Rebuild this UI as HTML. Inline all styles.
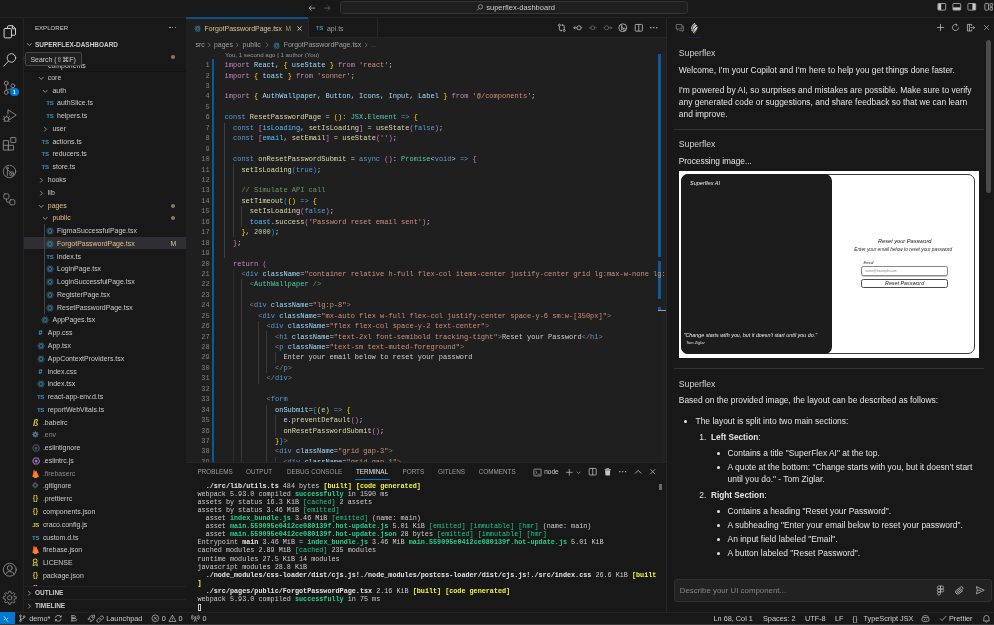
<!DOCTYPE html>
<html lang="en"><head><meta charset="utf-8"><title>superflex-dashboard</title>
<style>
html,body{margin:0;padding:0}
body{width:994px;height:625px;overflow:hidden;background:#181818;position:relative;font-family:"Liberation Sans",sans-serif;-webkit-font-smoothing:antialiased}
.t{position:absolute;white-space:nowrap;margin:0}
.b{position:absolute;display:block}
b{font-weight:bold}
#root{position:absolute;left:0;top:0;width:994px;height:625px;overflow:hidden;will-change:transform}
</style></head>
<body>
<div id="root">
<div class="b" style="left:0.00px;top:0.00px;width:994.00px;height:17.40px;background:#181818;"></div>
<div class="b" style="left:0.00px;top:17.20px;width:994.00px;height:0.90px;background:#242424;"></div>
<svg class="b" style="left:308.40px;top:3.50px;" width="8.2" height="8.2" viewBox="0 0 16 16"><path d="M14 8H2.5M7 3.2L2.2 8 7 12.8" fill="none" stroke="#c8c8c8" stroke-width="1.4"/></svg>
<svg class="b" style="left:323.40px;top:3.50px;" width="8.2" height="8.2" viewBox="0 0 16 16"><path d="M2 8h11.5M9 3.2L13.8 8 9 12.8" fill="none" stroke="#6a6a6a" stroke-width="1.4"/></svg>
<div class="b" style="left:339.50px;top:0.80px;width:348.80px;height:13.20px;background:#1f1f1f;border:0.7px solid #343434;border-radius:3.2px;box-sizing:border-box;"></div>
<svg class="b" style="left:475.50px;top:3.70px;" width="7.4" height="7.4" viewBox="0 0 16 16"><circle cx="9.8" cy="6.2" r="4.6" fill="none" stroke="#c8c8c8" stroke-width="1.3"/><path d="M6.4 9.6L1.6 14.4" stroke="#c8c8c8" stroke-width="1.3"/></svg>
<div class="t" style="top:2.00px;line-height:12.06px;font-size:7.54px;color:#cccccc;left:486.20px;">superflex-dashboard</div>
<svg class="b" style="left:937.45px;top:2.40px;" width="9.6" height="9.6" viewBox="0 0 16 16"><rect x="1.5" y="2.5" width="13" height="11" rx="1.2" fill="none" stroke="#ccc" stroke-width="1.2"/><rect x="2" y="3" width="5" height="10" fill="#ccc"/></svg>
<svg class="b" style="left:952.45px;top:2.40px;" width="9.6" height="9.6" viewBox="0 0 16 16"><rect x="1.5" y="2.5" width="13" height="11" rx="1.2" fill="none" stroke="#ccc" stroke-width="1.2"/><rect x="2" y="9" width="12" height="4" fill="#ccc"/></svg>
<svg class="b" style="left:967.45px;top:2.40px;" width="9.6" height="9.6" viewBox="0 0 16 16"><rect x="1.5" y="2.5" width="13" height="11" rx="1.2" fill="none" stroke="#ccc" stroke-width="1.2"/><rect x="9" y="3" width="5" height="10" fill="#ccc"/></svg>
<svg class="b" style="left:983.60px;top:2.40px;" width="9.6" height="9.6" viewBox="0 0 16 16"><rect x="1.5" y="2.5" width="6" height="11" rx="1" fill="none" stroke="#ccc" stroke-width="1.2"/><rect x="10" y="2.5" width="4.5" height="4.5" rx="1" fill="none" stroke="#ccc" stroke-width="1.2"/><rect x="10" y="9" width="4.5" height="4.5" rx="1" fill="none" stroke="#ccc" stroke-width="1.2"/></svg>
<div class="b" style="left:186.00px;top:18.00px;width:480.00px;height:444.00px;background:#1f1f1f;"></div>
<div class="b" style="left:186.00px;top:18.00px;width:480.00px;height:19.60px;background:#181818;"></div>
<div class="b" style="left:186.00px;top:37.20px;width:480.00px;height:0.80px;background:#262626;"></div>
<div class="b" style="left:186.40px;top:18.00px;width:121.60px;height:20.00px;background:#1f1f1f;"></div>
<div class="b" style="left:186.00px;top:17.10px;width:122.00px;height:1.70px;background:#0c5288;"></div>
<div class="b" style="left:308.00px;top:18.00px;width:0.70px;height:19.40px;background:#262626;"></div>
<div class="b" style="left:377.40px;top:18.00px;width:0.70px;height:19.40px;background:#262626;"></div>
<svg class="b" style="left:193.90px;top:24.50px;color:#3d8fb5;" width="7.4" height="7.4" viewBox="0 0 16 16"><g fill="none" stroke="currentColor" stroke-width="0.95"><ellipse cx="8" cy="8" rx="7" ry="2.8"/><ellipse cx="8" cy="8" rx="7" ry="2.8" transform="rotate(60 8 8)"/><ellipse cx="8" cy="8" rx="7" ry="2.8" transform="rotate(120 8 8)"/></g><circle cx="8" cy="8" r="1.3" fill="#4a2a2a"/></svg>
<div class="t" style="top:23.00px;line-height:11.12px;font-size:6.95px;color:#e2c08d;left:204.50px;">ForgotPasswordPage.tsx</div>
<div class="t" style="top:24.00px;line-height:10.56px;font-size:6.6px;color:#a8946f;left:285.40px;">M</div>
<svg class="b" style="left:296.10px;top:24.50px;" width="7" height="7" viewBox="0 0 16 16"><path d="M3.2 3.2l9.6 9.6M12.8 3.2l-9.6 9.6" stroke="#e4e4e4" stroke-width="1.9" fill="none"/></svg>
<div class="t" style="left:309.40px;width:20px;text-align:center;top:23px;line-height:10px;font-size:6.1px;color:#3b8fc0;font-weight:bold;letter-spacing:-0.3px;">TS</div>
<div class="t" style="top:23.00px;line-height:11.12px;font-size:6.95px;color:#9d9d9d;left:327.00px;">api.ts</div>
<svg class="b" style="left:557.20px;top:22.80px;" width="9.6" height="9.6" viewBox="0 0 16 16"><g fill="none" stroke="#c5c5c5" stroke-width="1.3"><circle cx="4" cy="3.6" r="1.7"/><circle cx="12" cy="12.4" r="1.7"/><path d="M4 5.3v5.4a1.7 1.7 0 0 0 1.7 1.7h2M12 10.7V5.3a1.7 1.7 0 0 0-1.7-1.7h-2"/><path d="M9.6 2l-1.6 1.6 1.6 1.6M6.4 10.8L8 12.4 6.4 14"/></g></svg>
<svg class="b" style="left:573.20px;top:22.80px;" width="9.6" height="9.6" viewBox="0 0 16 16"><g fill="none" stroke="#c5c5c5" stroke-width="1.3"><circle cx="10" cy="8" r="3.4"/><path d="M6.6 8H1.2M3.6 5.6L1.2 8l2.4 2.4M13.4 8h1.8"/></g></svg>
<svg class="b" style="left:588.20px;top:22.80px;" width="9.6" height="9.6" viewBox="0 0 16 16"><g fill="none" stroke="#6c6c6c" stroke-width="1.3"><circle cx="8" cy="8" r="3.2"/><path d="M1.4 8h3.4M11.2 8h3.4"/></g></svg>
<svg class="b" style="left:603.20px;top:22.80px;" width="9.6" height="9.6" viewBox="0 0 16 16"><g fill="none" stroke="#6c6c6c" stroke-width="1.3"><circle cx="6" cy="8" r="3.4"/><path d="M9.4 8h5.4M12.4 5.6L14.8 8l-2.4 2.4M0.8 8h1.8"/></g></svg>
<svg class="b" style="left:618.20px;top:22.80px;" width="9.6" height="9.6" viewBox="0 0 16 16"><g fill="none" stroke="#c5c5c5" stroke-width="1.3"><circle cx="8" cy="8" r="6.6"/><circle cx="6" cy="4.8" r="1"/><path d="M6 5.8v6.4M6.2 6.4l3 3"/><circle cx="10.2" cy="10.4" r="2"/></g></svg>
<svg class="b" style="left:633.70px;top:22.80px;" width="9.6" height="9.6" viewBox="0 0 16 16"><g fill="none" stroke="#c5c5c5" stroke-width="1.3"><rect x="2" y="2.4" width="12" height="11.2" rx="1.2"/><path d="M8 2.4v11.2"/></g></svg>
<svg class="b" style="left:648.70px;top:22.80px;" width="9.6" height="9.6" viewBox="0 0 16 16"><g fill="#c5c5c5"><circle cx="3" cy="8" r="1.15"/><circle cx="8" cy="8" r="1.15"/><circle cx="13" cy="8" r="1.15"/></g></svg>
<div class="t" style="top:39.00px;line-height:11.12px;font-size:6.95px;color:#a0a0a0;left:195.50px;">src</div>
<svg class="b" style="left:205.60px;top:42.20px;color:#8a8a8a;" width="6" height="6" viewBox="0 0 16 16"><path d="M5.4 2.2L11.2 8l-5.8 5.8" fill="none" stroke="currentColor" stroke-width="1.7"/></svg>
<div class="t" style="top:39.00px;line-height:11.12px;font-size:6.95px;color:#a0a0a0;left:214.00px;">pages</div>
<svg class="b" style="left:234.00px;top:42.20px;color:#8a8a8a;" width="6" height="6" viewBox="0 0 16 16"><path d="M5.4 2.2L11.2 8l-5.8 5.8" fill="none" stroke="currentColor" stroke-width="1.7"/></svg>
<div class="t" style="top:39.00px;line-height:11.12px;font-size:6.95px;color:#a0a0a0;left:242.60px;">public</div>
<svg class="b" style="left:263.80px;top:42.20px;color:#8a8a8a;" width="6" height="6" viewBox="0 0 16 16"><path d="M5.4 2.2L11.2 8l-5.8 5.8" fill="none" stroke="currentColor" stroke-width="1.7"/></svg>
<svg class="b" style="left:273.10px;top:41.50px;color:#3d8fb5;" width="7.4" height="7.4" viewBox="0 0 16 16"><g fill="none" stroke="currentColor" stroke-width="0.95"><ellipse cx="8" cy="8" rx="7" ry="2.8"/><ellipse cx="8" cy="8" rx="7" ry="2.8" transform="rotate(60 8 8)"/><ellipse cx="8" cy="8" rx="7" ry="2.8" transform="rotate(120 8 8)"/></g><circle cx="8" cy="8" r="1.3" fill="#4a2a2a"/></svg>
<div class="t" style="top:39.00px;line-height:11.12px;font-size:6.95px;color:#a0a0a0;left:283.75px;">ForgotPasswordPage.tsx</div>
<svg class="b" style="left:363.40px;top:42.20px;color:#8a8a8a;" width="6" height="6" viewBox="0 0 16 16"><path d="M5.4 2.2L11.2 8l-5.8 5.8" fill="none" stroke="currentColor" stroke-width="1.7"/></svg>
<div class="t" style="top:41.00px;line-height:8.0px;font-size:5.0px;color:#a0a0a0;left:371.00px;">…</div>
<div class="t" style="top:51.00px;line-height:8px;font-size:6.13px;color:#999999;left:225.00px;">You, 1 second ago | 1 author (You)</div>
<div class="b" style="left:662.00px;top:51.00px;width:4.00px;height:411.00px;background:#212121;"></div>
<div class="b" style="left:658.40px;top:53.80px;width:3.10px;height:202.80px;background:#0c5a9b;"></div>
<div class="b" style="left:658.40px;top:260.60px;width:3.10px;height:38.20px;background:#0c5a9b;"></div>
<div class="b" style="left:658.40px;top:306.90px;width:3.10px;height:3.40px;background:#0c5a9b;"></div>
<div class="b" style="left:658.40px;top:310.30px;width:7.60px;height:0.80px;background:#a0a0a0;"></div>
<div class="b" style="left:186px;top:51px;width:480px;height:411px;overflow:hidden;"><div class="b" style="left:-186px;top:-51px;width:994px;height:625px;"><div class="t" style="top:60.00px;line-height:10px;font-size:7.004px;color:#808080;right:784.40px;font-family:'Liberation Mono', monospace;">1</div><div class="t" style="top:60.00px;line-height:10px;font-size:7.004px;color:#cccccc;left:224.60px;font-family:'Liberation Mono', monospace;white-space:pre;"><span style="color:#c586c0">import</span> <span style="color:#9cdcfe">React</span>, <span style="color:#ffd700">{</span> <span style="color:#9cdcfe">useState</span> <span style="color:#ffd700">}</span> <span style="color:#c586c0">from</span> <span style="color:#ce9178">'react'</span>;</div><div class="t" style="top:71.00px;line-height:10px;font-size:7.004px;color:#808080;right:784.40px;font-family:'Liberation Mono', monospace;">2</div><div class="t" style="top:71.00px;line-height:10px;font-size:7.004px;color:#cccccc;left:224.60px;font-family:'Liberation Mono', monospace;white-space:pre;"><span style="color:#c586c0">import</span> <span style="color:#ffd700">{</span> <span style="color:#9cdcfe">toast</span> <span style="color:#ffd700">}</span> <span style="color:#c586c0">from</span> <span style="color:#ce9178">'sonner'</span>;</div><div class="t" style="top:81.00px;line-height:10px;font-size:7.004px;color:#808080;right:784.40px;font-family:'Liberation Mono', monospace;">3</div><div class="t" style="top:91.00px;line-height:10px;font-size:7.004px;color:#808080;right:784.40px;font-family:'Liberation Mono', monospace;">4</div><div class="t" style="top:91.00px;line-height:10px;font-size:7.004px;color:#cccccc;left:224.60px;font-family:'Liberation Mono', monospace;white-space:pre;"><span style="color:#c586c0">import</span> <span style="color:#ffd700">{</span> <span style="color:#9cdcfe">AuthWallpaper</span>, <span style="color:#9cdcfe">Button</span>, <span style="color:#9cdcfe">Icons</span>, <span style="color:#9cdcfe">Input</span>, <span style="color:#9cdcfe">Label</span> <span style="color:#ffd700">}</span> <span style="color:#c586c0">from</span> <span style="color:#ce9178">'@/components'</span>;</div><div class="t" style="top:102.00px;line-height:10px;font-size:7.004px;color:#808080;right:784.40px;font-family:'Liberation Mono', monospace;">5</div><div class="t" style="top:112.00px;line-height:10px;font-size:7.004px;color:#808080;right:784.40px;font-family:'Liberation Mono', monospace;">6</div><div class="t" style="top:112.00px;line-height:10px;font-size:7.004px;color:#cccccc;left:224.60px;font-family:'Liberation Mono', monospace;white-space:pre;"><span style="color:#569cd6">const</span> <span style="color:#dcdcaa">ResetPasswordPage</span> = <span style="color:#ffd700">()</span>: <span style="color:#4ec9b0">JSX</span>.<span style="color:#4ec9b0">Element</span> <span style="color:#569cd6">=&gt;</span> <span style="color:#ffd700">{</span></div><div class="t" style="top:123.00px;line-height:10px;font-size:7.004px;color:#808080;right:784.40px;font-family:'Liberation Mono', monospace;">7</div><div class="t" style="top:123.00px;line-height:10px;font-size:7.004px;color:#cccccc;left:224.60px;font-family:'Liberation Mono', monospace;white-space:pre;">  <span style="color:#569cd6">const</span> <span style="color:#da70d6">[</span><span style="color:#4fc1ff">isLoading</span>, <span style="color:#dcdcaa">setIsLoading</span><span style="color:#da70d6">]</span> = <span style="color:#dcdcaa">useState</span><span style="color:#da70d6">(</span><span style="color:#569cd6">false</span><span style="color:#da70d6">)</span>;</div><div class="t" style="top:133.00px;line-height:10px;font-size:7.004px;color:#808080;right:784.40px;font-family:'Liberation Mono', monospace;">8</div><div class="t" style="top:133.00px;line-height:10px;font-size:7.004px;color:#cccccc;left:224.60px;font-family:'Liberation Mono', monospace;white-space:pre;">  <span style="color:#569cd6">const</span> <span style="color:#da70d6">[</span><span style="color:#4fc1ff">email</span>, <span style="color:#dcdcaa">setEmail</span><span style="color:#da70d6">]</span> = <span style="color:#dcdcaa">useState</span><span style="color:#da70d6">(</span><span style="color:#ce9178">''</span><span style="color:#da70d6">)</span>;</div><div class="t" style="top:144.00px;line-height:10px;font-size:7.004px;color:#808080;right:784.40px;font-family:'Liberation Mono', monospace;">9</div><div class="t" style="top:154.00px;line-height:10px;font-size:7.004px;color:#808080;right:784.40px;font-family:'Liberation Mono', monospace;">10</div><div class="t" style="top:154.00px;line-height:10px;font-size:7.004px;color:#cccccc;left:224.60px;font-family:'Liberation Mono', monospace;white-space:pre;">  <span style="color:#569cd6">const</span> <span style="color:#dcdcaa">onResetPasswordSubmit</span> = <span style="color:#569cd6">async</span> <span style="color:#da70d6">()</span>: <span style="color:#4ec9b0">Promise</span>&lt;<span style="color:#569cd6">void</span>&gt; <span style="color:#569cd6">=&gt;</span> <span style="color:#da70d6">{</span></div><div class="t" style="top:165.00px;line-height:10px;font-size:7.004px;color:#808080;right:784.40px;font-family:'Liberation Mono', monospace;">11</div><div class="t" style="top:165.00px;line-height:10px;font-size:7.004px;color:#cccccc;left:224.60px;font-family:'Liberation Mono', monospace;white-space:pre;">    <span style="color:#dcdcaa">setIsLoading</span><span style="color:#179fff">(</span><span style="color:#569cd6">true</span><span style="color:#179fff">)</span>;</div><div class="t" style="top:175.00px;line-height:10px;font-size:7.004px;color:#808080;right:784.40px;font-family:'Liberation Mono', monospace;">12</div><div class="t" style="top:185.00px;line-height:10px;font-size:7.004px;color:#808080;right:784.40px;font-family:'Liberation Mono', monospace;">13</div><div class="t" style="top:185.00px;line-height:10px;font-size:7.004px;color:#cccccc;left:224.60px;font-family:'Liberation Mono', monospace;white-space:pre;">    <span style="color:#6a9955">// Simulate API call</span></div><div class="t" style="top:196.00px;line-height:10px;font-size:7.004px;color:#808080;right:784.40px;font-family:'Liberation Mono', monospace;">14</div><div class="t" style="top:196.00px;line-height:10px;font-size:7.004px;color:#cccccc;left:224.60px;font-family:'Liberation Mono', monospace;white-space:pre;">    <span style="color:#dcdcaa">setTimeout</span><span style="color:#179fff">(</span><span style="color:#ffd700">()</span> <span style="color:#569cd6">=&gt;</span> <span style="color:#ffd700">{</span></div><div class="t" style="top:206.00px;line-height:10px;font-size:7.004px;color:#808080;right:784.40px;font-family:'Liberation Mono', monospace;">15</div><div class="t" style="top:206.00px;line-height:10px;font-size:7.004px;color:#cccccc;left:224.60px;font-family:'Liberation Mono', monospace;white-space:pre;">      <span style="color:#dcdcaa">setIsLoading</span><span style="color:#da70d6">(</span><span style="color:#569cd6">false</span><span style="color:#da70d6">)</span>;</div><div class="t" style="top:217.00px;line-height:10px;font-size:7.004px;color:#808080;right:784.40px;font-family:'Liberation Mono', monospace;">16</div><div class="t" style="top:217.00px;line-height:10px;font-size:7.004px;color:#cccccc;left:224.60px;font-family:'Liberation Mono', monospace;white-space:pre;">      <span style="color:#4fc1ff">toast</span>.<span style="color:#dcdcaa">success</span><span style="color:#da70d6">(</span><span style="color:#ce9178">'Password reset email sent'</span><span style="color:#da70d6">)</span>;</div><div class="t" style="top:227.00px;line-height:10px;font-size:7.004px;color:#808080;right:784.40px;font-family:'Liberation Mono', monospace;">17</div><div class="t" style="top:227.00px;line-height:10px;font-size:7.004px;color:#cccccc;left:224.60px;font-family:'Liberation Mono', monospace;white-space:pre;">    <span style="color:#ffd700">}</span>, <span style="color:#b5cea8">2000</span><span style="color:#179fff">)</span>;</div><div class="t" style="top:238.00px;line-height:10px;font-size:7.004px;color:#808080;right:784.40px;font-family:'Liberation Mono', monospace;">18</div><div class="t" style="top:238.00px;line-height:10px;font-size:7.004px;color:#cccccc;left:224.60px;font-family:'Liberation Mono', monospace;white-space:pre;">  <span style="color:#da70d6">}</span>;</div><div class="t" style="top:248.00px;line-height:10px;font-size:7.004px;color:#808080;right:784.40px;font-family:'Liberation Mono', monospace;">19</div><div class="t" style="top:259.00px;line-height:10px;font-size:7.004px;color:#808080;right:784.40px;font-family:'Liberation Mono', monospace;">20</div><div class="t" style="top:259.00px;line-height:10px;font-size:7.004px;color:#cccccc;left:224.60px;font-family:'Liberation Mono', monospace;white-space:pre;">  <span style="color:#c586c0">return</span> <span style="color:#da70d6">(</span></div><div class="t" style="top:269.00px;line-height:10px;font-size:7.004px;color:#808080;right:784.40px;font-family:'Liberation Mono', monospace;">21</div><div class="t" style="top:269.00px;line-height:10px;font-size:7.004px;color:#cccccc;left:224.60px;font-family:'Liberation Mono', monospace;white-space:pre;">    <span style="color:#808080">&lt;</span><span style="color:#569cd6">div</span> <span style="color:#9cdcfe">className</span>=<span style="color:#ce9178">"container relative h-full flex-col items-center justify-center grid lg:max-w-none lg:grid-cols-2 lg:px-0"</span><span style="color:#808080">&gt;</span></div><div class="t" style="top:279.00px;line-height:10px;font-size:7.004px;color:#808080;right:784.40px;font-family:'Liberation Mono', monospace;">22</div><div class="t" style="top:279.00px;line-height:10px;font-size:7.004px;color:#cccccc;left:224.60px;font-family:'Liberation Mono', monospace;white-space:pre;">      <span style="color:#808080">&lt;</span><span style="color:#4ec9b0">AuthWallpaper</span> <span style="color:#808080">/&gt;</span></div><div class="t" style="top:290.00px;line-height:10px;font-size:7.004px;color:#808080;right:784.40px;font-family:'Liberation Mono', monospace;">23</div><div class="t" style="top:300.00px;line-height:10px;font-size:7.004px;color:#808080;right:784.40px;font-family:'Liberation Mono', monospace;">24</div><div class="t" style="top:300.00px;line-height:10px;font-size:7.004px;color:#cccccc;left:224.60px;font-family:'Liberation Mono', monospace;white-space:pre;">      <span style="color:#808080">&lt;</span><span style="color:#569cd6">div</span> <span style="color:#9cdcfe">className</span>=<span style="color:#ce9178">"lg:p-8"</span><span style="color:#808080">&gt;</span></div><div class="t" style="top:311.00px;line-height:10px;font-size:7.004px;color:#808080;right:784.40px;font-family:'Liberation Mono', monospace;">25</div><div class="t" style="top:311.00px;line-height:10px;font-size:7.004px;color:#cccccc;left:224.60px;font-family:'Liberation Mono', monospace;white-space:pre;">        <span style="color:#808080">&lt;</span><span style="color:#569cd6">div</span> <span style="color:#9cdcfe">className</span>=<span style="color:#ce9178">"mx-auto flex w-full flex-col justify-center space-y-6 sm:w-[350px]"</span><span style="color:#808080">&gt;</span></div><div class="t" style="top:321.00px;line-height:10px;font-size:7.004px;color:#808080;right:784.40px;font-family:'Liberation Mono', monospace;">26</div><div class="t" style="top:321.00px;line-height:10px;font-size:7.004px;color:#cccccc;left:224.60px;font-family:'Liberation Mono', monospace;white-space:pre;">          <span style="color:#808080">&lt;</span><span style="color:#569cd6">div</span> <span style="color:#9cdcfe">className</span>=<span style="color:#ce9178">"flex flex-col space-y-2 text-center"</span><span style="color:#808080">&gt;</span></div><div class="t" style="top:332.00px;line-height:10px;font-size:7.004px;color:#808080;right:784.40px;font-family:'Liberation Mono', monospace;">27</div><div class="t" style="top:332.00px;line-height:10px;font-size:7.004px;color:#cccccc;left:224.60px;font-family:'Liberation Mono', monospace;white-space:pre;">            <span style="color:#808080">&lt;</span><span style="color:#569cd6">h1</span> <span style="color:#9cdcfe">className</span>=<span style="color:#ce9178">"text-2xl font-semibold tracking-tight"</span><span style="color:#808080">&gt;</span>Reset your Password<span style="color:#808080">&lt;/</span><span style="color:#569cd6">h1</span><span style="color:#808080">&gt;</span></div><div class="t" style="top:342.00px;line-height:10px;font-size:7.004px;color:#808080;right:784.40px;font-family:'Liberation Mono', monospace;">28</div><div class="t" style="top:342.00px;line-height:10px;font-size:7.004px;color:#cccccc;left:224.60px;font-family:'Liberation Mono', monospace;white-space:pre;">            <span style="color:#808080">&lt;</span><span style="color:#569cd6">p</span> <span style="color:#9cdcfe">className</span>=<span style="color:#ce9178">"text-sm text-muted-foreground"</span><span style="color:#808080">&gt;</span></div><div class="t" style="top:352.00px;line-height:10px;font-size:7.004px;color:#808080;right:784.40px;font-family:'Liberation Mono', monospace;">29</div><div class="t" style="top:352.00px;line-height:10px;font-size:7.004px;color:#cccccc;left:224.60px;font-family:'Liberation Mono', monospace;white-space:pre;">              Enter your email below to reset your password</div><div class="t" style="top:363.00px;line-height:10px;font-size:7.004px;color:#808080;right:784.40px;font-family:'Liberation Mono', monospace;">30</div><div class="t" style="top:363.00px;line-height:10px;font-size:7.004px;color:#cccccc;left:224.60px;font-family:'Liberation Mono', monospace;white-space:pre;">            <span style="color:#808080">&lt;/</span><span style="color:#569cd6">p</span><span style="color:#808080">&gt;</span></div><div class="t" style="top:373.00px;line-height:10px;font-size:7.004px;color:#808080;right:784.40px;font-family:'Liberation Mono', monospace;">31</div><div class="t" style="top:373.00px;line-height:10px;font-size:7.004px;color:#cccccc;left:224.60px;font-family:'Liberation Mono', monospace;white-space:pre;">          <span style="color:#808080">&lt;/</span><span style="color:#569cd6">div</span><span style="color:#808080">&gt;</span></div><div class="t" style="top:384.00px;line-height:10px;font-size:7.004px;color:#808080;right:784.40px;font-family:'Liberation Mono', monospace;">32</div><div class="t" style="top:394.00px;line-height:10px;font-size:7.004px;color:#808080;right:784.40px;font-family:'Liberation Mono', monospace;">33</div><div class="t" style="top:394.00px;line-height:10px;font-size:7.004px;color:#cccccc;left:224.60px;font-family:'Liberation Mono', monospace;white-space:pre;">          <span style="color:#808080">&lt;</span><span style="color:#569cd6">form</span></div><div class="t" style="top:405.00px;line-height:10px;font-size:7.004px;color:#808080;right:784.40px;font-family:'Liberation Mono', monospace;">34</div><div class="t" style="top:405.00px;line-height:10px;font-size:7.004px;color:#cccccc;left:224.60px;font-family:'Liberation Mono', monospace;white-space:pre;">            <span style="color:#9cdcfe">onSubmit</span>=<span style="color:#179fff">{</span><span style="color:#ffd700">(</span><span style="color:#9cdcfe">e</span><span style="color:#ffd700">)</span> <span style="color:#569cd6">=&gt;</span> <span style="color:#ffd700">{</span></div><div class="t" style="top:415.00px;line-height:10px;font-size:7.004px;color:#808080;right:784.40px;font-family:'Liberation Mono', monospace;">35</div><div class="t" style="top:415.00px;line-height:10px;font-size:7.004px;color:#cccccc;left:224.60px;font-family:'Liberation Mono', monospace;white-space:pre;">              <span style="color:#9cdcfe">e</span>.<span style="color:#dcdcaa">preventDefault</span><span style="color:#da70d6">()</span>;</div><div class="t" style="top:426.00px;line-height:10px;font-size:7.004px;color:#808080;right:784.40px;font-family:'Liberation Mono', monospace;">36</div><div class="t" style="top:426.00px;line-height:10px;font-size:7.004px;color:#cccccc;left:224.60px;font-family:'Liberation Mono', monospace;white-space:pre;">              <span style="color:#dcdcaa">onResetPasswordSubmit</span><span style="color:#da70d6">()</span>;</div><div class="t" style="top:436.00px;line-height:10px;font-size:7.004px;color:#808080;right:784.40px;font-family:'Liberation Mono', monospace;">37</div><div class="t" style="top:436.00px;line-height:10px;font-size:7.004px;color:#cccccc;left:224.60px;font-family:'Liberation Mono', monospace;white-space:pre;">            <span style="color:#ffd700">}</span><span style="color:#179fff">}</span><span style="color:#808080">&gt;</span></div><div class="t" style="top:446.00px;line-height:10px;font-size:7.004px;color:#808080;right:784.40px;font-family:'Liberation Mono', monospace;">38</div><div class="t" style="top:446.00px;line-height:10px;font-size:7.004px;color:#cccccc;left:224.60px;font-family:'Liberation Mono', monospace;white-space:pre;">            <span style="color:#808080">&lt;</span><span style="color:#569cd6">div</span> <span style="color:#9cdcfe">className</span>=<span style="color:#ce9178">"grid gap-3"</span><span style="color:#808080">&gt;</span></div><div class="t" style="top:457.00px;line-height:10px;font-size:7.004px;color:#808080;right:784.40px;font-family:'Liberation Mono', monospace;">39</div><div class="t" style="top:457.00px;line-height:10px;font-size:7.004px;color:#cccccc;left:224.60px;font-family:'Liberation Mono', monospace;white-space:pre;">              <span style="color:#808080">&lt;</span><span style="color:#569cd6">div</span> <span style="color:#9cdcfe">className</span>=<span style="color:#ce9178">"grid gap-1"</span><span style="color:#808080">&gt;</span></div><div class="b" style="left:224.30px;top:122.62px;width:0.60px;height:135.72px;background:#404040;"></div><div class="b" style="left:232.71px;top:164.38px;width:0.60px;height:73.08px;background:#393939;"></div><div class="b" style="left:241.11px;top:206.14px;width:0.60px;height:20.88px;background:#393939;"></div><div class="b" style="left:232.71px;top:268.78px;width:0.60px;height:198.36px;background:#2c2c2c;"></div><div class="b" style="left:241.11px;top:279.22px;width:0.60px;height:187.92px;background:#393939;"></div><div class="b" style="left:257.92px;top:320.98px;width:0.60px;height:62.64px;background:#393939;"></div><div class="b" style="left:266.32px;top:331.42px;width:0.60px;height:41.76px;background:#393939;"></div><div class="b" style="left:274.73px;top:352.30px;width:0.60px;height:10.44px;background:#393939;"></div><div class="b" style="left:266.32px;top:404.50px;width:0.60px;height:62.64px;background:#393939;"></div><div class="b" style="left:274.73px;top:414.94px;width:0.60px;height:20.88px;background:#393939;"></div><div class="b" style="left:274.73px;top:456.70px;width:0.60px;height:10.44px;background:#393939;"></div><div class="b" style="left:212.00px;top:59.40px;width:2.00px;height:403.00px;background:#0b5a98;"></div></div></div>
<div class="b" style="left:666.00px;top:18.00px;width:1.00px;height:594.00px;background:#262626;"></div>
<div class="b" style="left:186.00px;top:462.00px;width:480.00px;height:150.00px;background:#181818;"></div>
<div class="b" style="left:186.00px;top:461.60px;width:480.00px;height:0.80px;background:#262626;"></div>
<div class="t" style="top:467.00px;line-height:10.13px;font-size:6.33px;color:#9d9d9d;left:197.50px;">PROBLEMS</div>
<div class="t" style="top:467.00px;line-height:10.13px;font-size:6.33px;color:#9d9d9d;left:246.00px;">OUTPUT</div>
<div class="t" style="top:467.00px;line-height:10.13px;font-size:6.33px;color:#9d9d9d;left:287.00px;">DEBUG CONSOLE</div>
<div class="t" style="top:467.00px;line-height:10.13px;font-size:6.33px;color:#e7e7e7;left:356.00px;">TERMINAL</div>
<div class="t" style="top:467.00px;line-height:10.13px;font-size:6.33px;color:#9d9d9d;left:402.50px;">PORTS</div>
<div class="t" style="top:467.00px;line-height:10.13px;font-size:6.33px;color:#9d9d9d;left:438.00px;">GITLENS</div>
<div class="t" style="top:467.00px;line-height:10.13px;font-size:6.33px;color:#9d9d9d;left:478.75px;">COMMENTS</div>
<div class="b" style="left:355.00px;top:478.50px;width:35.00px;height:0.80px;background:#0078d4;"></div>
<svg class="b" style="left:532.50px;top:467.50px;" width="9" height="9" viewBox="0 0 16 16"><g fill="none" stroke="#c5c5c5" stroke-width="1.2"><rect x="1.6" y="2" width="12.8" height="12" rx="1"/><path d="M4.2 5.2l3 2.8-3 2.8M8.4 11h3.4"/></g></svg>
<div class="t" style="top:467.00px;line-height:10.4px;font-size:6.5px;color:#cccccc;left:544.25px;">node</div>
<svg class="b" style="left:565.45px;top:467.70px;" width="8.6" height="8.6" viewBox="0 0 16 16"><path d="M8 1.8v12.4M1.8 8h12.4" stroke="#c5c5c5" stroke-width="1.3" fill="none"/></svg>
<svg class="b" style="left:576.40px;top:469.70px;color:#c5c5c5;" width="5.2" height="5.2" viewBox="0 0 16 16"><path d="M2.2 5.2L8 11l5.8-5.8" fill="none" stroke="currentColor" stroke-width="1.7"/></svg>
<svg class="b" style="left:588.30px;top:467.30px;" width="9.4" height="9.4" viewBox="0 0 16 16"><g fill="none" stroke="#c5c5c5" stroke-width="1.3"><rect x="2" y="2.4" width="12" height="11.2" rx="1.2"/><path d="M8 2.4v11.2"/></g></svg>
<svg class="b" style="left:602.80px;top:467.30px;" width="9.4" height="9.4" viewBox="0 0 16 16"><g fill="#c5c5c5"><path d="M5.6 2.2h4.8v1.2h3v1.4H2.6V3.4h3z"/><path d="M3.6 5.6h8.8l-.6 8a1 1 0 0 1-1 .9H5.2a1 1 0 0 1-1-.9z"/></g></svg>
<svg class="b" style="left:618.30px;top:467.30px;" width="9.4" height="9.4" viewBox="0 0 16 16"><g fill="#c5c5c5"><circle cx="3" cy="8" r="1.1"/><circle cx="8" cy="8" r="1.1"/><circle cx="13" cy="8" r="1.1"/></g></svg>
<svg class="b" style="left:633.80px;top:467.80px;" width="8.4" height="8.4" viewBox="0 0 16 16"><path d="M2 10.6l6-6 6 6" stroke="#c5c5c5" stroke-width="1.5" fill="none"/></svg>
<svg class="b" style="left:649.30px;top:468.30px;" width="7.4" height="7.4" viewBox="0 0 16 16"><path d="M2.6 2.6l10.8 10.8M13.4 2.6L2.6 13.4" stroke="#c5c5c5" stroke-width="1.5" fill="none"/></svg>
<div class="t" style="top:482.00px;line-height:8.1px;font-size:6.78px;color:#cccccc;left:197.50px;font-family:'Liberation Mono', monospace;white-space:pre;">  <span style="color:#e5e5e5;font-weight:bold;">./src/lib/utils.ts</span> 484 bytes <span style="color:#f5f543;font-weight:bold;">[built]</span> <span style="color:#f5f543;font-weight:bold;">[code generated]</span></div>
<div class="t" style="top:490.00px;line-height:8.1px;font-size:6.78px;color:#cccccc;left:197.50px;font-family:'Liberation Mono', monospace;white-space:pre;">webpack 5.93.0 compiled <span style="color:#23d18b;font-weight:bold;">successfully</span> in 1590 ms</div>
<div class="t" style="top:498.00px;line-height:8.1px;font-size:6.78px;color:#cccccc;left:197.50px;font-family:'Liberation Mono', monospace;white-space:pre;">assets by status 16.3 KiB <span style="color:#1ec584;">[cached]</span> 2 assets</div>
<div class="t" style="top:506.00px;line-height:8.1px;font-size:6.78px;color:#cccccc;left:197.50px;font-family:'Liberation Mono', monospace;white-space:pre;">assets by status 3.46 MiB <span style="color:#1ec584;">[emitted]</span></div>
<div class="t" style="top:514.00px;line-height:8.1px;font-size:6.78px;color:#cccccc;left:197.50px;font-family:'Liberation Mono', monospace;white-space:pre;">  asset <span style="color:#23d18b;font-weight:bold;">index_bundle.js</span> 3.46 MiB <span style="color:#1ec584;">[emitted]</span> (name: main)</div>
<div class="t" style="top:522.00px;line-height:8.1px;font-size:6.78px;color:#cccccc;left:197.50px;font-family:'Liberation Mono', monospace;white-space:pre;">  asset <span style="color:#23d18b;font-weight:bold;">main.559095e0412ce080139f.hot-update.js</span> 5.01 KiB <span style="color:#1ec584;">[emitted]</span> <span style="color:#1ec584;">[immutable]</span> <span style="color:#1ec584;">[hmr]</span> (name: main)</div>
<div class="t" style="top:530.00px;line-height:8.1px;font-size:6.78px;color:#cccccc;left:197.50px;font-family:'Liberation Mono', monospace;white-space:pre;">  asset <span style="color:#23d18b;font-weight:bold;">main.559095e0412ce080139f.hot-update.json</span> 28 bytes <span style="color:#1ec584;">[emitted]</span> <span style="color:#1ec584;">[immutable]</span> <span style="color:#1ec584;">[hmr]</span></div>
<div class="t" style="top:538.00px;line-height:8.1px;font-size:6.78px;color:#cccccc;left:197.50px;font-family:'Liberation Mono', monospace;white-space:pre;">Entrypoint <span style="color:#e5e5e5;font-weight:bold;">main</span> 3.46 MiB = <span style="color:#23d18b;font-weight:bold;">index_bundle.js</span> 3.46 MiB <span style="color:#23d18b;font-weight:bold;">main.559095e0412ce080139f.hot-update.js</span> 5.01 KiB</div>
<div class="t" style="top:546.00px;line-height:8.1px;font-size:6.78px;color:#cccccc;left:197.50px;font-family:'Liberation Mono', monospace;white-space:pre;">cached modules 2.89 MiB <span style="color:#1ec584;">[cached]</span> 235 modules</div>
<div class="t" style="top:555.00px;line-height:8.1px;font-size:6.78px;color:#cccccc;left:197.50px;font-family:'Liberation Mono', monospace;white-space:pre;">runtime modules 27.5 KiB 14 modules</div>
<div class="t" style="top:563.00px;line-height:8.1px;font-size:6.78px;color:#cccccc;left:197.50px;font-family:'Liberation Mono', monospace;white-space:pre;">javascript modules 28.8 KiB</div>
<div class="t" style="top:571.00px;line-height:8.1px;font-size:6.78px;color:#cccccc;left:197.50px;font-family:'Liberation Mono', monospace;white-space:pre;">  <span style="color:#e5e5e5;font-weight:bold;">./node_modules/css-loader/dist/cjs.js!./node_modules/postcss-loader/dist/cjs.js!./src/index.css</span> 26.6 KiB <span style="color:#f5f543;font-weight:bold;">[built</span></div>
<div class="t" style="top:579.00px;line-height:8.1px;font-size:6.78px;color:#cccccc;left:197.50px;font-family:'Liberation Mono', monospace;white-space:pre;"><span style="color:#f5f543;font-weight:bold;">]</span></div>
<div class="t" style="top:587.00px;line-height:8.1px;font-size:6.78px;color:#cccccc;left:197.50px;font-family:'Liberation Mono', monospace;white-space:pre;">  <span style="color:#e5e5e5;font-weight:bold;">./src/pages/public/ForgotPasswordPage.tsx</span> 2.16 KiB <span style="color:#f5f543;font-weight:bold;">[built]</span> <span style="color:#f5f543;font-weight:bold;">[code generated]</span></div>
<div class="t" style="top:595.00px;line-height:8.1px;font-size:6.78px;color:#cccccc;left:197.50px;font-family:'Liberation Mono', monospace;white-space:pre;">webpack 5.93.0 compiled <span style="color:#23d18b;font-weight:bold;">successfully</span> in 75 ms</div>
<div class="b" style="left:197.80px;top:603.85px;width:3.40px;height:7.00px;border:0.7px solid #cfcfcf;box-sizing:border-box;"></div>
<div class="b" style="left:659.00px;top:483.80px;width:2.80px;height:6.20px;background:#6b6b6b;"></div>
<div class="b" style="left:0.00px;top:18.00px;width:23.00px;height:594.00px;background:#181818;"></div>
<div class="b" style="left:23.00px;top:18.00px;width:1.00px;height:594.00px;background:#232323;"></div>
<svg class="b" style="left:1.55px;top:23.85px;color:#d7d7d7;" width="15.5" height="15.5" viewBox="0 0 24 24"><g fill="none" stroke="currentColor" stroke-width="1.5" stroke-linecap="round" stroke-linejoin="round"><path d="M8.6 6.8V4.2a1.6 1.6 0 0 1 1.6-1.6h6.1l4.6 4.6v8.6a1.6 1.6 0 0 1-1.6 1.6h-4.6"/><path d="M16 2.8v4.6h4.7"/><rect x="3.2" y="6.9" width="11.4" height="14.6" rx="1.7"/></g></svg>
<svg class="b" style="left:1.85px;top:51.85px;color:#c4c4c4;" width="15.5" height="15.5" viewBox="0 0 24 24"><g fill="none" stroke="currentColor" stroke-width="1.5" stroke-linecap="round" stroke-linejoin="round"><circle cx="14.6" cy="9.2" r="6.6"/><path d="M10 14.2L2.8 21.8"/></g></svg>
<svg class="b" style="left:2.25px;top:79.65px;color:#868686;" width="15.5" height="15.5" viewBox="0 0 24 24"><g fill="none" stroke="currentColor" stroke-width="1.5" stroke-linecap="round" stroke-linejoin="round"><circle cx="6.6" cy="4.8" r="3"/><circle cx="6.6" cy="19.2" r="3"/><circle cx="16.8" cy="9" r="3"/><path d="M6.6 7.8v8.4"/><path d="M16.8 12c0 3.6-10.2 1.2-10.2 4.2"/></g></svg>
<svg class="b" style="left:1.65px;top:107.85px;color:#868686;" width="15.5" height="15.5" viewBox="0 0 24 24"><g fill="none" stroke="currentColor" stroke-width="1.5" stroke-linecap="round" stroke-linejoin="round"><path d="M9.2 9.4V2.6L22 11l-8.2 5.4"/><circle cx="7.2" cy="17.2" r="3.6"/><path d="M7.2 13.6v-1.4M3.6 17.2H1.6M12.8 17.2h-2M4.3 14.6l-1.5-1.5M10.1 14.6l1.5-1.5M4.3 19.9l-1.5 1.5M10.1 19.9l1.5 1.5"/></g></svg>
<svg class="b" style="left:1.65px;top:135.85px;color:#868686;" width="15.5" height="15.5" viewBox="0 0 24 24"><g fill="none" stroke="currentColor" stroke-width="1.5" stroke-linecap="round" stroke-linejoin="round"><path d="M2.6 7.2h7.6v14.6H2.6zM10.2 14.4h7.6v7.4h-7.6zM2.6 14.4h7.6"/><rect x="13.6" y="2.4" width="7.8" height="7.8" rx="0.6"/></g></svg>
<svg class="b" style="left:2.10px;top:163.70px;color:#868686;" width="15" height="15" viewBox="0 0 24 24"><g fill="none" stroke="currentColor" stroke-width="1.4" stroke-linecap="round" stroke-linejoin="round"><circle cx="12" cy="12" r="10"/><circle cx="8.6" cy="6.6" r="1.5"/><path d="M8.6 8.1v11"/><circle cx="15.6" cy="15.8" r="3.4"/><path d="M9 9.2l4.4 4.4"/><path d="M14.8 14.4v2.8l2.4-1.4z" fill="currentColor" stroke-width="0.6"/></g></svg>
<svg class="b" style="left:2.35px;top:191.75px;color:#868686;" width="14.5" height="14.5" viewBox="0 0 24 24"><g fill="none" stroke="currentColor" stroke-width="1.5" stroke-linecap="round" stroke-linejoin="round"><rect x="3" y="3" width="8.4" height="8.4" rx="2"/><rect x="12.8" y="12.8" width="8.4" height="8.4" rx="2"/><path d="M7.2 11.4v2.6a3 3 0 0 0 3 3h2.6"/></g></svg>
<div class="b" style="left:10.00px;top:87.75px;width:8.50px;height:8.50px;background:#0078d4;border-radius:50%;"></div>
<div class="t" style="left:10px;width:8.5px;text-align:center;top:87.75px;line-height:8.5px;font-size:5.4px;color:#fff;font-weight:bold;">1</div>
<svg class="b" style="left:1.85px;top:562.00px;color:#868686;" width="15.5" height="15.5" viewBox="0 0 24 24"><g fill="none" stroke="currentColor" stroke-width="1.5" stroke-linecap="round" stroke-linejoin="round"><circle cx="12" cy="12" r="10"/><circle cx="12" cy="9.2" r="3.8"/><path d="M5 19.2a7.6 7.6 0 0 1 14 0"/></g></svg>
<svg class="b" style="left:1.65px;top:590.00px;color:#868686;" width="15.5" height="15.5" viewBox="0 0 24 24"><g fill="none" stroke="currentColor" stroke-width="1.4" stroke-linecap="round" stroke-linejoin="round"><path d="M19.39 10.23 L22.11 10.64 L22.11 13.36 L19.39 13.77 L18.48 15.97 L20.11 18.19 L18.19 20.11 L15.97 18.48 L13.77 19.39 L13.36 22.11 L10.64 22.11 L10.23 19.39 L8.03 18.48 L5.81 20.11 L3.89 18.19 L5.52 15.97 L4.61 13.77 L1.89 13.36 L1.89 10.64 L4.61 10.23 L5.52 8.03 L3.89 5.81 L5.81 3.89 L8.03 5.52 L10.23 4.61 L10.64 1.89 L13.36 1.89 L13.77 4.61 L15.97 5.52 L18.19 3.89 L20.11 5.81 L18.48 8.03Z"/><circle cx="12" cy="12" r="3.4"/></g></svg>
<div class="b" style="left:24.00px;top:18.00px;width:162.00px;height:594.00px;background:#181818;"></div>
<div class="t" style="top:24.00px;line-height:9.68px;font-size:6.05px;color:#cccccc;left:35.00px;letter-spacing:0.02px;">EXPLORER</div>
<div class="b" style="left:169.40px;top:27.20px;width:1.20px;height:1.20px;background:#c0c0c0;border-radius:50%;"></div>
<div class="b" style="left:172.00px;top:27.20px;width:1.20px;height:1.20px;background:#c0c0c0;border-radius:50%;"></div>
<div class="b" style="left:174.60px;top:27.20px;width:1.20px;height:1.20px;background:#c0c0c0;border-radius:50%;"></div>
<svg class="b" style="left:25.90px;top:41.30px;color:#c5c5c5;" width="6.6" height="6.6" viewBox="0 0 16 16"><path d="M2.2 5.2L8 11l5.8-5.8" fill="none" stroke="currentColor" stroke-width="1.7"/></svg>
<div class="t" style="top:40.00px;line-height:10.35px;font-size:6.47px;color:#cccccc;left:35.00px;font-weight:bold;">SUPERFLEX-DASHBOARD</div>
<div class="b" style="left:0;top:51px;width:186px;height:535px;overflow:hidden;"><div class="b" style="left:0;top:-51px;width:186px;height:625px;"><div class="b" style="left:24.00px;top:237.11px;width:162.00px;height:12.30px;background:#2e2e34;"></div><div class="t" style="top:60.00px;line-height:11.12px;font-size:6.95px;color:#cccccc;left:48.00px;">components</div><div class="b" style="left:44.30px;top:224.34px;width:0.60px;height:89.39px;background:#454545;"></div><svg class="b" style="left:37.70px;top:74.67px;color:#c5c5c5;" width="6.4" height="6.4" viewBox="0 0 16 16"><path d="M2.2 5.2L8 11l5.8-5.8" fill="none" stroke="currentColor" stroke-width="1.7"/></svg><div class="t" style="top:72.00px;line-height:11.12px;font-size:6.95px;color:#cccccc;left:47.80px;">core</div><svg class="b" style="left:42.40px;top:87.67px;color:#c5c5c5;" width="6.4" height="6.4" viewBox="0 0 16 16"><path d="M2.2 5.2L8 11l5.8-5.8" fill="none" stroke="currentColor" stroke-width="1.7"/></svg><div class="t" style="top:85.00px;line-height:11.12px;font-size:6.95px;color:#cccccc;left:52.50px;">auth</div><div class="t" style="left:39.80px;width:20px;text-align:center;top:98px;line-height:10px;font-size:6.1px;color:#3b8fc0;font-weight:bold;letter-spacing:-0.3px;">TS</div><div class="t" style="top:97.00px;line-height:11.12px;font-size:6.95px;color:#cccccc;left:57.10px;">authSlice.ts</div><div class="t" style="left:39.80px;width:20px;text-align:center;top:111px;line-height:10px;font-size:6.1px;color:#3b8fc0;font-weight:bold;letter-spacing:-0.3px;">TS</div><div class="t" style="top:110.00px;line-height:11.12px;font-size:6.95px;color:#cccccc;left:57.10px;">helpers.ts</div><svg class="b" style="left:42.40px;top:125.67px;color:#c5c5c5;" width="6.4" height="6.4" viewBox="0 0 16 16"><path d="M5.4 2.2L11.2 8l-5.8 5.8" fill="none" stroke="currentColor" stroke-width="1.7"/></svg><div class="t" style="top:123.00px;line-height:11.12px;font-size:6.95px;color:#cccccc;left:52.50px;">user</div><div class="t" style="left:35.20px;width:20px;text-align:center;top:137px;line-height:10px;font-size:6.1px;color:#3b8fc0;font-weight:bold;letter-spacing:-0.3px;">TS</div><div class="t" style="top:136.00px;line-height:11.12px;font-size:6.95px;color:#cccccc;left:52.50px;">actions.ts</div><div class="t" style="left:35.20px;width:20px;text-align:center;top:149px;line-height:10px;font-size:6.1px;color:#3b8fc0;font-weight:bold;letter-spacing:-0.3px;">TS</div><div class="t" style="top:148.00px;line-height:11.12px;font-size:6.95px;color:#cccccc;left:52.50px;">reducers.ts</div><div class="t" style="left:35.20px;width:20px;text-align:center;top:162px;line-height:10px;font-size:6.1px;color:#3b8fc0;font-weight:bold;letter-spacing:-0.3px;">TS</div><div class="t" style="top:161.00px;line-height:11.12px;font-size:6.95px;color:#cccccc;left:52.50px;">store.ts</div><svg class="b" style="left:37.70px;top:176.67px;color:#c5c5c5;" width="6.4" height="6.4" viewBox="0 0 16 16"><path d="M5.4 2.2L11.2 8l-5.8 5.8" fill="none" stroke="currentColor" stroke-width="1.7"/></svg><div class="t" style="top:174.00px;line-height:11.12px;font-size:6.95px;color:#cccccc;left:47.80px;">hooks</div><svg class="b" style="left:37.70px;top:189.67px;color:#c5c5c5;" width="6.4" height="6.4" viewBox="0 0 16 16"><path d="M5.4 2.2L11.2 8l-5.8 5.8" fill="none" stroke="currentColor" stroke-width="1.7"/></svg><div class="t" style="top:187.00px;line-height:11.12px;font-size:6.95px;color:#cccccc;left:47.80px;">lib</div><svg class="b" style="left:37.70px;top:202.67px;color:#c5c5c5;" width="6.4" height="6.4" viewBox="0 0 16 16"><path d="M2.2 5.2L8 11l5.8-5.8" fill="none" stroke="currentColor" stroke-width="1.7"/></svg><div class="t" style="top:200.00px;line-height:11.12px;font-size:6.95px;color:#e2c08d;left:47.80px;">pages</div><div class="b" style="left:171.10px;top:203.67px;width:4.20px;height:4.20px;background:#8a7a5c;border-radius:50%;"></div><svg class="b" style="left:42.40px;top:214.67px;color:#c5c5c5;" width="6.4" height="6.4" viewBox="0 0 16 16"><path d="M2.2 5.2L8 11l5.8-5.8" fill="none" stroke="currentColor" stroke-width="1.7"/></svg><div class="t" style="top:212.00px;line-height:11.12px;font-size:6.95px;color:#e2c08d;left:52.50px;">public</div><div class="b" style="left:171.10px;top:215.67px;width:4.20px;height:4.20px;background:#8a7a5c;border-radius:50%;"></div><svg class="b" style="left:45.80px;top:226.67px;color:#3d8fb5;" width="8.0" height="8.0" viewBox="0 0 16 16"><g fill="none" stroke="currentColor" stroke-width="0.95"><ellipse cx="8" cy="8" rx="7" ry="2.8"/><ellipse cx="8" cy="8" rx="7" ry="2.8" transform="rotate(60 8 8)"/><ellipse cx="8" cy="8" rx="7" ry="2.8" transform="rotate(120 8 8)"/></g><circle cx="8" cy="8" r="1.3" fill="#4a2a2a"/></svg><div class="t" style="top:225.00px;line-height:11.12px;font-size:6.95px;color:#cccccc;left:57.10px;">FigmaSuccessfulPage.tsx</div><svg class="b" style="left:45.80px;top:239.67px;color:#3d8fb5;" width="8.0" height="8.0" viewBox="0 0 16 16"><g fill="none" stroke="currentColor" stroke-width="0.95"><ellipse cx="8" cy="8" rx="7" ry="2.8"/><ellipse cx="8" cy="8" rx="7" ry="2.8" transform="rotate(60 8 8)"/><ellipse cx="8" cy="8" rx="7" ry="2.8" transform="rotate(120 8 8)"/></g><circle cx="8" cy="8" r="1.3" fill="#4a2a2a"/></svg><div class="t" style="top:238.00px;line-height:11.12px;font-size:6.95px;color:#e2c08d;left:57.10px;">ForgotPasswordPage.tsx</div><div class="t" style="top:238.00px;line-height:11.12px;font-size:6.95px;color:#e2c08d;left:170.40px;">M</div><div class="t" style="left:39.80px;width:20px;text-align:center;top:252px;line-height:10px;font-size:6.1px;color:#3b8fc0;font-weight:bold;letter-spacing:-0.3px;">TS</div><div class="t" style="top:251.00px;line-height:11.12px;font-size:6.95px;color:#cccccc;left:57.10px;">index.ts</div><svg class="b" style="left:45.80px;top:264.67px;color:#3d8fb5;" width="8.0" height="8.0" viewBox="0 0 16 16"><g fill="none" stroke="currentColor" stroke-width="0.95"><ellipse cx="8" cy="8" rx="7" ry="2.8"/><ellipse cx="8" cy="8" rx="7" ry="2.8" transform="rotate(60 8 8)"/><ellipse cx="8" cy="8" rx="7" ry="2.8" transform="rotate(120 8 8)"/></g><circle cx="8" cy="8" r="1.3" fill="#4a2a2a"/></svg><div class="t" style="top:263.00px;line-height:11.12px;font-size:6.95px;color:#cccccc;left:57.10px;">LoginPage.tsx</div><svg class="b" style="left:45.80px;top:277.67px;color:#3d8fb5;" width="8.0" height="8.0" viewBox="0 0 16 16"><g fill="none" stroke="currentColor" stroke-width="0.95"><ellipse cx="8" cy="8" rx="7" ry="2.8"/><ellipse cx="8" cy="8" rx="7" ry="2.8" transform="rotate(60 8 8)"/><ellipse cx="8" cy="8" rx="7" ry="2.8" transform="rotate(120 8 8)"/></g><circle cx="8" cy="8" r="1.3" fill="#4a2a2a"/></svg><div class="t" style="top:276.00px;line-height:11.12px;font-size:6.95px;color:#cccccc;left:57.10px;">LoginSuccessfulPage.tsx</div><svg class="b" style="left:45.80px;top:290.67px;color:#3d8fb5;" width="8.0" height="8.0" viewBox="0 0 16 16"><g fill="none" stroke="currentColor" stroke-width="0.95"><ellipse cx="8" cy="8" rx="7" ry="2.8"/><ellipse cx="8" cy="8" rx="7" ry="2.8" transform="rotate(60 8 8)"/><ellipse cx="8" cy="8" rx="7" ry="2.8" transform="rotate(120 8 8)"/></g><circle cx="8" cy="8" r="1.3" fill="#4a2a2a"/></svg><div class="t" style="top:289.00px;line-height:11.12px;font-size:6.95px;color:#cccccc;left:57.10px;">RegisterPage.tsx</div><svg class="b" style="left:45.80px;top:303.67px;color:#3d8fb5;" width="8.0" height="8.0" viewBox="0 0 16 16"><g fill="none" stroke="currentColor" stroke-width="0.95"><ellipse cx="8" cy="8" rx="7" ry="2.8"/><ellipse cx="8" cy="8" rx="7" ry="2.8" transform="rotate(60 8 8)"/><ellipse cx="8" cy="8" rx="7" ry="2.8" transform="rotate(120 8 8)"/></g><circle cx="8" cy="8" r="1.3" fill="#4a2a2a"/></svg><div class="t" style="top:302.00px;line-height:11.12px;font-size:6.95px;color:#cccccc;left:57.10px;">ResetPasswordPage.tsx</div><svg class="b" style="left:41.20px;top:315.67px;color:#3d8fb5;" width="8.0" height="8.0" viewBox="0 0 16 16"><g fill="none" stroke="currentColor" stroke-width="0.95"><ellipse cx="8" cy="8" rx="7" ry="2.8"/><ellipse cx="8" cy="8" rx="7" ry="2.8" transform="rotate(60 8 8)"/><ellipse cx="8" cy="8" rx="7" ry="2.8" transform="rotate(120 8 8)"/></g><circle cx="8" cy="8" r="1.3" fill="#4a2a2a"/></svg><div class="t" style="top:314.00px;line-height:11.12px;font-size:6.95px;color:#cccccc;left:52.50px;">AppPages.tsx</div><div class="t" style="left:30.50px;width:20px;text-align:center;top:328px;line-height:10px;font-size:7.2px;color:#4d9fd0;font-weight:bold;">#</div><div class="t" style="top:327.00px;line-height:11.12px;font-size:6.95px;color:#cccccc;left:47.80px;">App.css</div><svg class="b" style="left:36.50px;top:341.67px;color:#3d8fb5;" width="8.0" height="8.0" viewBox="0 0 16 16"><g fill="none" stroke="currentColor" stroke-width="0.95"><ellipse cx="8" cy="8" rx="7" ry="2.8"/><ellipse cx="8" cy="8" rx="7" ry="2.8" transform="rotate(60 8 8)"/><ellipse cx="8" cy="8" rx="7" ry="2.8" transform="rotate(120 8 8)"/></g><circle cx="8" cy="8" r="1.3" fill="#4a2a2a"/></svg><div class="t" style="top:340.00px;line-height:11.12px;font-size:6.95px;color:#cccccc;left:47.80px;">App.tsx</div><svg class="b" style="left:36.50px;top:354.67px;color:#3d8fb5;" width="8.0" height="8.0" viewBox="0 0 16 16"><g fill="none" stroke="currentColor" stroke-width="0.95"><ellipse cx="8" cy="8" rx="7" ry="2.8"/><ellipse cx="8" cy="8" rx="7" ry="2.8" transform="rotate(60 8 8)"/><ellipse cx="8" cy="8" rx="7" ry="2.8" transform="rotate(120 8 8)"/></g><circle cx="8" cy="8" r="1.3" fill="#4a2a2a"/></svg><div class="t" style="top:353.00px;line-height:11.12px;font-size:6.95px;color:#cccccc;left:47.80px;">AppContextProviders.tsx</div><div class="t" style="left:30.50px;width:20px;text-align:center;top:367px;line-height:10px;font-size:7.2px;color:#4d9fd0;font-weight:bold;">#</div><div class="t" style="top:366.00px;line-height:11.12px;font-size:6.95px;color:#cccccc;left:47.80px;">index.css</div><svg class="b" style="left:36.50px;top:379.67px;color:#3d8fb5;" width="8.0" height="8.0" viewBox="0 0 16 16"><g fill="none" stroke="currentColor" stroke-width="0.95"><ellipse cx="8" cy="8" rx="7" ry="2.8"/><ellipse cx="8" cy="8" rx="7" ry="2.8" transform="rotate(60 8 8)"/><ellipse cx="8" cy="8" rx="7" ry="2.8" transform="rotate(120 8 8)"/></g><circle cx="8" cy="8" r="1.3" fill="#4a2a2a"/></svg><div class="t" style="top:378.00px;line-height:11.12px;font-size:6.95px;color:#cccccc;left:47.80px;">index.tsx</div><div class="t" style="left:30.50px;width:20px;text-align:center;top:392px;line-height:10px;font-size:6.1px;color:#3b8fc0;font-weight:bold;letter-spacing:-0.3px;">TS</div><div class="t" style="top:391.00px;line-height:11.12px;font-size:6.95px;color:#cccccc;left:47.80px;">react-app-env.d.ts</div><div class="t" style="left:30.50px;width:20px;text-align:center;top:405px;line-height:10px;font-size:6.1px;color:#3b8fc0;font-weight:bold;letter-spacing:-0.3px;">TS</div><div class="t" style="top:404.00px;line-height:11.12px;font-size:6.95px;color:#cccccc;left:47.80px;">reportWebVitals.ts</div><div class="t" style="left:25.60px;width:20px;text-align:center;top:418px;line-height:10px;font-size:8.6px;color:#cbcb41;font-weight:bold;font-style:italic;">ß</div><div class="t" style="top:417.00px;line-height:11.12px;font-size:6.95px;color:#cccccc;left:42.90px;">.babelrc</div><svg class="b" style="left:32.20px;top:431.27px;color:#5c7c8a;" width="6.8" height="6.8" viewBox="0 0 24 24"><g fill="none" stroke="currentColor" stroke-width="1.2" stroke-linecap="round" stroke-linejoin="round"><path d="M19.20 10.27 L22.41 10.60 L22.41 13.40 L19.20 13.73 L18.31 15.87 L20.35 18.37 L18.37 20.35 L15.87 18.31 L13.73 19.20 L13.40 22.41 L10.60 22.41 L10.27 19.20 L8.13 18.31 L5.63 20.35 L3.65 18.37 L5.69 15.87 L4.80 13.73 L1.59 13.40 L1.59 10.60 L4.80 10.27 L5.69 8.13 L3.65 5.63 L5.63 3.65 L8.13 5.69 L10.27 4.80 L10.60 1.59 L13.40 1.59 L13.73 4.80 L15.87 5.69 L18.37 3.65 L20.35 5.63 L18.31 8.13Z" fill="currentColor"/><circle cx="12" cy="12" r="3.6" fill="#181818"/></g></svg><div class="t" style="top:429.00px;line-height:11.12px;font-size:6.95px;color:#8c8c8c;left:42.90px;">.env</div><svg class="b" style="left:31.50px;top:443.57px;color:#4a565b;" width="8.2" height="8.2" viewBox="0 0 16 16"><polygon points="14.80,8.00 11.40,13.89 4.60,13.89 1.20,8.00 4.60,2.11 11.40,2.11" fill="none" stroke="currentColor" stroke-width="2"/><polygon points="11.00,8.00 9.50,10.60 6.50,10.60 5.00,8.00 6.50,5.40 9.50,5.40" fill="currentColor"/></svg><div class="t" style="top:442.00px;line-height:11.12px;font-size:6.95px;color:#cccccc;left:42.90px;">.eslintignore</div><svg class="b" style="left:31.50px;top:456.57px;color:#a074c4;" width="8.2" height="8.2" viewBox="0 0 16 16"><polygon points="14.80,8.00 11.40,13.89 4.60,13.89 1.20,8.00 4.60,2.11 11.40,2.11" fill="none" stroke="currentColor" stroke-width="2"/><polygon points="11.00,8.00 9.50,10.60 6.50,10.60 5.00,8.00 6.50,5.40 9.50,5.40" fill="currentColor"/></svg><div class="t" style="top:455.00px;line-height:11.12px;font-size:6.95px;color:#cccccc;left:42.90px;">.eslintrc.js</div><svg class="b" style="left:31.00px;top:468.77px;" width="9.2" height="9.2" viewBox="0 0 16 16"><path d="M2.5 13.2L4.4 1.6c.1-.5.7-.6 1-.2L7.4 5l1-1.9c.2-.4.8-.4 1 0l4.2 10.1-5 2.6c-.4.2-.8.2-1.2 0z" fill="#f55a1f"/><path d="M2.5 13.2L8.6 3.2 13.6 13.2 8.6 15.8c-.4.2-.8.2-1.2 0z" fill="#f7812a"/></svg><div class="t" style="top:468.00px;line-height:11.12px;font-size:6.95px;color:#8c8c8c;left:42.90px;">.firebaserc</div><svg class="b" style="left:31.40px;top:481.47px;" width="8.4" height="8.4" viewBox="0 0 16 16"><rect x="3.2" y="3.2" width="9.6" height="9.6" transform="rotate(45 8 8)" fill="#41535b"/><circle cx="8" cy="8" r="1.6" fill="#181818"/></svg><div class="t" style="top:480.00px;line-height:11.12px;font-size:6.95px;color:#cccccc;left:42.90px;">.gitignore</div><div class="t" style="left:25.60px;width:20px;text-align:center;top:493px;line-height:10px;font-size:6.6px;color:#cbcb41;font-weight:bold;letter-spacing:0.3px;">{}</div><div class="t" style="top:493.00px;line-height:11.12px;font-size:6.95px;color:#cccccc;left:42.90px;">.prettierrc</div><div class="t" style="left:25.60px;width:20px;text-align:center;top:506px;line-height:10px;font-size:6.6px;color:#cbcb41;font-weight:bold;letter-spacing:0.3px;">{}</div><div class="t" style="top:506.00px;line-height:11.12px;font-size:6.95px;color:#cccccc;left:42.90px;">components.json</div><div class="t" style="left:25.60px;width:20px;text-align:center;top:520px;line-height:10px;font-size:6.1px;color:#cbcb41;font-weight:bold;letter-spacing:-0.3px;">JS</div><div class="t" style="top:519.00px;line-height:11.12px;font-size:6.95px;color:#cccccc;left:42.90px;">craco.config.js</div><div class="t" style="left:25.60px;width:20px;text-align:center;top:533px;line-height:10px;font-size:6.1px;color:#3b8fc0;font-weight:bold;letter-spacing:-0.3px;">TS</div><div class="t" style="top:532.00px;line-height:11.12px;font-size:6.95px;color:#cccccc;left:42.90px;">custom.d.ts</div><svg class="b" style="left:31.00px;top:544.77px;" width="9.2" height="9.2" viewBox="0 0 16 16"><path d="M2.5 13.2L4.4 1.6c.1-.5.7-.6 1-.2L7.4 5l1-1.9c.2-.4.8-.4 1 0l4.2 10.1-5 2.6c-.4.2-.8.2-1.2 0z" fill="#f55a1f"/><path d="M2.5 13.2L8.6 3.2 13.6 13.2 8.6 15.8c-.4.2-.8.2-1.2 0z" fill="#f7812a"/></svg><div class="t" style="top:544.00px;line-height:11.12px;font-size:6.95px;color:#cccccc;left:42.90px;">firebase.json</div><svg class="b" style="left:31.40px;top:558.47px;" width="8.4" height="8.4" viewBox="0 0 16 16"><circle cx="8" cy="5.4" r="3.6" fill="none" stroke="#cbcb41" stroke-width="2"/><path d="M5.4 8.2L3.8 15l4.2-2.4 4.2 2.4-1.6-6.8" fill="none" stroke="#cbcb41" stroke-width="1.8" stroke-linejoin="round"/></svg><div class="t" style="top:557.00px;line-height:11.12px;font-size:6.95px;color:#cccccc;left:42.90px;">LICENSE</div><div class="t" style="left:25.60px;width:20px;text-align:center;top:570px;line-height:10px;font-size:6.6px;color:#cbcb41;font-weight:bold;letter-spacing:0.3px;">{}</div><div class="t" style="top:570.00px;line-height:11.12px;font-size:6.95px;color:#cccccc;left:42.90px;">package.json</div><div class="t" style="left:25.60px;width:20px;text-align:center;top:583px;line-height:10px;font-size:6.6px;color:#cbcb41;font-weight:bold;letter-spacing:0.3px;">{}</div><div class="t" style="top:583.00px;line-height:11.12px;font-size:6.95px;color:#cccccc;left:42.90px;">postcss.config.js</div></div></div>
<div class="b" style="left:171.10px;top:55.20px;width:4.20px;height:4.20px;background:#8a7a5c;border-radius:50%;"></div>
<div class="b" style="left:24.00px;top:70.60px;width:162.00px;height:1.00px;background:#121212;"></div>
<div class="b" style="left:25.20px;top:52.30px;width:57.20px;height:13.60px;background:#202020;border:0.6px solid #454545;border-radius:2px;box-sizing:border-box;"></div>
<svg class="b" style="left:22.4px;top:56.4px" width="3.4" height="5" viewBox="0 0 3.4 5"><path d="M3.4 0L0.4 2.5 3.4 5z" fill="#202020" stroke="#454545" stroke-width="0.5"/></svg>
<div class="t" style="top:54.00px;line-height:11.04px;font-size:6.9px;color:#cccccc;left:30.50px;font-family:'Liberation Sans','DejaVu Sans',sans-serif;">Search (⇧⌘F)</div>
<div class="b" style="left:24.00px;top:586.00px;width:162.00px;height:1.00px;background:#222222;"></div>
<svg class="b" style="left:26.40px;top:589.70px;color:#c5c5c5;" width="6.4" height="6.4" viewBox="0 0 16 16"><path d="M5.4 2.2L11.2 8l-5.8 5.8" fill="none" stroke="currentColor" stroke-width="1.7"/></svg>
<div class="t" style="top:588.00px;line-height:10.35px;font-size:6.47px;color:#cccccc;left:35.00px;font-weight:bold;">OUTLINE</div>
<div class="b" style="left:24.00px;top:599.00px;width:162.00px;height:1.00px;background:#232323;"></div>
<svg class="b" style="left:26.40px;top:602.70px;color:#c5c5c5;" width="6.4" height="6.4" viewBox="0 0 16 16"><path d="M5.4 2.2L11.2 8l-5.8 5.8" fill="none" stroke="currentColor" stroke-width="1.7"/></svg>
<div class="t" style="top:601.00px;line-height:10.35px;font-size:6.47px;color:#cccccc;left:35.00px;font-weight:bold;">TIMELINE</div>
<div class="b" style="left:667.00px;top:18.00px;width:327.00px;height:594.00px;background:#181818;"></div>
<svg class="b" style="left:674.50px;top:22.80px;" width="9.6" height="9.6" viewBox="0 0 16 16"><g fill="none" stroke="#8a8a8a" stroke-width="1.2"><path d="M2 2.600h9.600v7.200H6.400L4 12V9.800H2z"/><path d="M11.600 5.400H14v7.200h-1.600V14.400l-2.200-1.800H7"/></g></svg>
<svg class="b" style="left:687.90px;top:21.50px;" width="12.6" height="12.6" viewBox="0 0 16 16"><path d="M8.400 0.800C6.500 3 3.600 5.400 3.800 8.600C4 11.400 6.400 12.600 8 15.200C9.400 12.800 12.400 10.400 12.200 6.800C12 4.200 9.600 3 8.400 0.800Z" fill="#d4d4d4"/><g fill="none" stroke="#181818" stroke-width="1.15" stroke-linecap="round"><path d="M10.400 1.800C7 4 5.400 6 4.800 9.400"/><path d="M12.800 4.600C8.800 6.600 7 8.800 6.200 12.200"/><path d="M13 8.800C10.400 10 9 11.600 8.200 14.200"/></g></svg>
<div class="b" style="left:688.00px;top:36.60px;width:12.60px;height:0.90px;background:#11293f;"></div>
<svg class="b" style="left:936.00px;top:23.10px;" width="9" height="9" viewBox="0 0 16 16"><path d="M8 1.600v12.800M1.600 8h12.800" stroke="#c5c5c5" stroke-width="1.3" fill="none"/></svg>
<svg class="b" style="left:951.00px;top:23.10px;" width="9" height="9" viewBox="0 0 16 16"><g fill="none" stroke="#c5c5c5" stroke-width="1.3"><path d="M13.400 8A5.400 5.400 0 1 1 10.800 3.400"/><path d="M8.600 1.200l2.600 2.200-2.200 2.600"/></g></svg>
<svg class="b" style="left:966.30px;top:22.90px;" width="9.4" height="9.4" viewBox="0 0 16 16"><g fill="none" stroke="#c5c5c5" stroke-width="1.3"><path d="M9.600 5V2.400H2.400v11.200h7.200V11"/><path d="M5.800 2.400v11.200"/><path d="M7.600 8h7M12.200 5.600L14.600 8l-2.400 2.400"/></g></svg>
<svg class="b" style="left:982.50px;top:24.10px;" width="7" height="7" viewBox="0 0 16 16"><path d="M2.600 2.600l10.800 10.800M13.400 2.600L2.600 13.400" stroke="#c5c5c5" stroke-width="1.5" fill="none"/></svg>
<div class="b" style="left:986.00px;top:40.00px;width:5.00px;height:152.50px;background:#4b4b4b;border-radius:2.5px;"></div>
<div class="t" style="top:47.00px;line-height:13.92px;font-size:8.7px;color:#d0d0d0;left:678.75px;">Superflex</div>
<div class="t" style="top:64.00px;line-height:13.52px;font-size:8.45px;color:#e4e4e4;left:678.75px;">Welcome, I'm your Copilot and I'm here to help you get things done faster.</div>
<div class="t" style="top:84.00px;line-height:13.52px;font-size:8.45px;color:#e4e4e4;left:678.75px;">I'm powered by AI, so surprises and mistakes are possible. Make sure to verify</div>
<div class="t" style="top:96.00px;line-height:13.52px;font-size:8.45px;color:#e4e4e4;left:678.75px;">any generated code or suggestions, and share feedback so that we can learn</div>
<div class="t" style="top:108.00px;line-height:13.52px;font-size:8.45px;color:#e4e4e4;left:678.75px;">and improve.</div>
<div class="b" style="left:673.75px;top:128.50px;width:310.50px;height:0.80px;background:#333;"></div>
<div class="t" style="top:138.00px;line-height:13.92px;font-size:8.7px;color:#d0d0d0;left:678.75px;">Superflex</div>
<div class="t" style="top:155.00px;line-height:13.34px;font-size:8.34px;color:#e4e4e4;left:678.75px;">Processing image...</div>
<div class="b" style="left:678.50px;top:171.25px;width:300.75px;height:187.20px;background:#ffffff;"></div>
<div class="b" style="left:681.40px;top:174.40px;width:293.40px;height:179.40px;border:0.6px solid #3a3a3a;border-radius:7px;box-sizing:border-box;"></div>
<div class="b" style="left:681.00px;top:174.25px;width:150.60px;height:179.60px;background:#1c1c1c;border-radius:7px;"></div>
<div class="t" style="top:179.00px;line-height:8.9px;font-size:5.56px;color:#f0f0f0;left:690.00px;font-family:'Liberation Sans', sans-serif;font-style:italic;">Superflex AI</div>
<div class="t" style="top:331.00px;line-height:8.56px;font-size:5.35px;color:#f0f0f0;left:683.60px;font-family:'Liberation Sans', sans-serif;font-style:italic;">"Change starts with you, but it doesn't start until you do."</div>
<div class="t" style="top:340.00px;line-height:6.4px;font-size:4.0px;color:#e0e0e0;left:686.00px;font-family:'Liberation Sans', sans-serif;font-style:italic;">Tom Ziglar</div>
<div class="t" style="top:237.00px;line-height:9.01px;font-size:5.63px;color:#1a1a1a;left:878.00px;font-family:'Liberation Sans', sans-serif;font-style:italic;">Reset your Password</div>
<div class="t" style="top:246.00px;line-height:7.65px;font-size:4.78px;color:#2a2a2a;left:854.25px;font-family:'Liberation Sans', sans-serif;font-style:italic;">Enter your email below to reset your password</div>
<div class="t" style="top:260.00px;line-height:6.4px;font-size:4.0px;color:#2a2a2a;left:863.50px;font-family:'Liberation Sans', sans-serif;font-style:italic;">Email</div>
<div class="b" style="left:860.80px;top:265.75px;width:87.00px;height:9.75px;background:#fff;border:0.7px solid #8a8a8a;border-radius:2.4px;box-sizing:border-box;box-shadow:0 0.5px 0.8px rgba(0,0,0,.25);"></div>
<div class="t" style="top:269.00px;line-height:5.28px;font-size:3.3px;color:#7c8594;left:865.25px;font-family:'Liberation Sans', sans-serif;font-style:italic;">name@example.com</div>
<div class="b" style="left:860.80px;top:278.50px;width:87.00px;height:9.50px;background:#fff;border:0.7px solid #4a4a4a;border-radius:2.4px;box-sizing:border-box;"></div>
<div class="t" style="top:279.00px;line-height:8.62px;font-size:5.39px;color:#1a1a1a;left:885.00px;font-family:'Liberation Sans', sans-serif;font-style:italic;">Reset Password</div>
<div class="b" style="left:673.75px;top:368.00px;width:310.50px;height:0.80px;background:#333;"></div>
<div class="t" style="top:378.00px;line-height:13.92px;font-size:8.7px;color:#d0d0d0;left:678.75px;">Superflex</div>
<div class="t" style="top:394.00px;line-height:13.52px;font-size:8.45px;color:#e4e4e4;left:678.75px;">Based on the provided image, the layout can be described as follows:</div>
<div class="b" style="left:683.50px;top:419.60px;width:3.00px;height:3.00px;background:#e4e4e4;border-radius:50%;"></div>
<div class="t" style="top:415.00px;line-height:13.52px;font-size:8.45px;color:#e4e4e4;left:695.50px;">The layout is split into two main sections:</div>
<div class="t" style="top:431.00px;line-height:13.52px;font-size:8.45px;color:#e4e4e4;left:699.25px;">1.</div>
<div class="t" style="top:431.00px;line-height:13.2px;font-size:8.25px;color:#e4e4e4;left:711.00px;"><b>Left Section</b>:</div>
<div class="b" style="left:717.00px;top:452.10px;width:3.00px;height:3.00px;background:#e4e4e4;border-radius:50%;"></div>
<div class="t" style="top:447.00px;line-height:13.52px;font-size:8.45px;color:#e4e4e4;left:727.50px;">Contains a title "SuperFlex AI" at the top.</div>
<div class="b" style="left:717.00px;top:466.30px;width:3.00px;height:3.00px;background:#e4e4e4;border-radius:50%;"></div>
<div class="t" style="top:461.00px;line-height:13.52px;font-size:8.45px;color:#e4e4e4;left:727.50px;">A quote at the bottom: "Change starts with you, but it doesn't start</div>
<div class="t" style="top:473.00px;line-height:13.52px;font-size:8.45px;color:#e4e4e4;left:727.50px;">until you do." - Tom Ziglar.</div>
<div class="t" style="top:489.00px;line-height:13.52px;font-size:8.45px;color:#e4e4e4;left:699.25px;">2.</div>
<div class="t" style="top:489.00px;line-height:13.2px;font-size:8.25px;color:#e4e4e4;left:711.00px;"><b>Right Section</b>:</div>
<div class="b" style="left:717.00px;top:510.10px;width:3.00px;height:3.00px;background:#e4e4e4;border-radius:50%;"></div>
<div class="t" style="top:505.00px;line-height:13.52px;font-size:8.45px;color:#e4e4e4;left:727.50px;">Contains a heading "Reset your Password".</div>
<div class="b" style="left:717.00px;top:524.10px;width:3.00px;height:3.00px;background:#e4e4e4;border-radius:50%;"></div>
<div class="t" style="top:519.00px;line-height:13.52px;font-size:8.45px;color:#e4e4e4;left:727.50px;">A subheading "Enter your email below to reset your password".</div>
<div class="b" style="left:717.00px;top:538.10px;width:3.00px;height:3.00px;background:#e4e4e4;border-radius:50%;"></div>
<div class="t" style="top:533.00px;line-height:13.52px;font-size:8.45px;color:#e4e4e4;left:727.50px;">An input field labeled "Email".</div>
<div class="b" style="left:717.00px;top:552.10px;width:3.00px;height:3.00px;background:#e4e4e4;border-radius:50%;"></div>
<div class="t" style="top:547.00px;line-height:13.52px;font-size:8.45px;color:#e4e4e4;left:727.50px;">A button labeled "Reset Password".</div>
<div class="b" style="left:674.25px;top:578.50px;width:318.00px;height:23.75px;background:#222222;border:0.7px solid #313131;border-radius:3px;box-sizing:border-box;"></div>
<div class="t" style="top:585.00px;line-height:12.62px;font-size:7.89px;color:#858585;left:679.75px;">Describe your UI component...</div>
<svg class="b" style="left:935.00px;top:585.00px;" width="11" height="11" viewBox="0 0 16 16"><g fill="none" stroke="#b8b8b8" stroke-width="1.15"><path d="M8 1.400H5.600a2.200 2.200 0 0 0 0 4.400H8zM8 1.400h2.400a2.200 2.200 0 0 1 0 4.400H8zM8 5.800H5.600a2.200 2.200 0 0 0 0 4.400H8zM8 10.200H5.600A2.200 2.200 0 1 0 8 12.400z"/><circle cx="10.400" cy="8" r="2.200"/></g></svg>
<svg class="b" style="left:953.50px;top:585.00px;" width="11" height="11" viewBox="0 0 16 16"><path d="M13 7.400L7.800 12.600a3 3 0 0 1-4.300-4.300L9 2.800a2 2 0 0 1 2.900 2.900L6.500 11a1 1 0 0 1-1.500-1.500l4.800-4.700" fill="none" stroke="#b8b8b8" stroke-width="1.2" transform="rotate(8 8 8)"/></svg>
<svg class="b" style="left:975.00px;top:585.25px;" width="10.5" height="10.5" viewBox="0 0 16 16"><path d="M2 2.400L14 8 2 13.600l1.600-5.600zM3.600 8H9" fill="none" stroke="#b8b8b8" stroke-width="1.2" stroke-linejoin="round"/></svg>
<div class="b" style="left:0.00px;top:612.00px;width:994.00px;height:13.00px;background:#181818;"></div>
<div class="b" style="left:0.00px;top:611.60px;width:994.00px;height:0.80px;background:#232323;"></div>
<div class="b" style="left:0.00px;top:612.40px;width:15.00px;height:12.60px;background:#0078d4;"></div>
<div class="b" style="left:0.00px;top:624.00px;width:994.00px;height:1.00px;background:#3a3a3a;"></div>
<svg class="b" style="left:2.20px;top:614.60px;" width="8" height="8" viewBox="0 0 16 16"><path d="M3.6 2.4L7.6 6.4 3.6 10.4M12.4 5.6L8.4 9.6l4 4" stroke="#fff" stroke-width="1.3" fill="none"/></svg>
<svg class="b" style="left:18.30px;top:614.30px;" width="8.6" height="8.6" viewBox="0 0 16 16"><g fill="none" stroke="#cccccc" stroke-width="1.3"><circle cx="4.6" cy="3.4" r="1.6"/><circle cx="4.6" cy="12.6" r="1.6"/><circle cx="11.4" cy="5" r="1.6"/><path d="M4.6 5v6M11.4 6.6c0 3-6.8 1.6-6.8 4.4"/></g></svg>
<div class="t" style="top:613.00px;line-height:11.68px;font-size:7.3px;color:#cccccc;left:29.25px;">demo*</div>
<svg class="b" style="left:53.70px;top:614.30px;" width="8.6" height="8.6" viewBox="0 0 16 16"><g fill="none" stroke="#cccccc" stroke-width="1.3"><path d="M2.6 7A5.6 5.6 0 0 1 13 5.4M13.4 9A5.6 5.6 0 0 1 3 10.6"/><path d="M13.4 2.4v3.2h-3.2M2.6 13.6v-3.2h3.2"/></g></svg>
<svg class="b" style="left:69.95px;top:614.30px;" width="8.6" height="8.6" viewBox="0 0 16 16"><g fill="none" stroke="#cccccc" stroke-width="1.3"><path d="M3.4 1.8v12.4M3.4 3.2h5.2l2 2-2 2H3.4M3.4 8.6h7.4l2 2-2 2H3.4"/></g></svg>
<svg class="b" style="left:87.35px;top:614.20px;" width="8.8" height="8.8" viewBox="0 0 16 16"><g fill="none" stroke="#cccccc" stroke-width="1.2"><path d="M6 10L3.6 7.6C5 4 8.6 1.8 13.8 2.2c.4 5.2-1.8 8.800-5.400 10.200L6 10z"/><circle cx="10" cy="6" r="1.3"/><path d="M4 9.600l-2 .6.600-2.400M6.400 12l-.6 2 2.400-.6"/></g></svg>
<svg class="b" style="left:96.10px;top:614.50px;" width="8.2" height="8.2" viewBox="0 0 16 16"><g fill="none" stroke="#cccccc" stroke-width="1.4"><path d="M7 9a3 3 0 0 0 4.3.2l2.200-2.200a3 3 0 0 0-4.300-4.200L8.200 3.800M9 7a3 3 0 0 0-4.300-.2L2.500 9a3 3 0 0 0 4.300 4.200l1-1"/></g></svg>
<div class="t" style="top:613.00px;line-height:11.68px;font-size:7.3px;color:#cccccc;left:106.25px;">Launchpad</div>
<svg class="b" style="left:151.30px;top:614.30px;" width="8.6" height="8.6" viewBox="0 0 16 16"><g fill="none" stroke="#cccccc" stroke-width="1.2"><circle cx="8" cy="8" r="6.2"/><path d="M5.400 5.400l5.200 5.200M10.600 5.400l-5.200 5.200"/></g></svg>
<div class="t" style="top:613.00px;line-height:11.68px;font-size:7.3px;color:#cccccc;left:161.80px;">0</div>
<svg class="b" style="left:168.20px;top:614.20px;" width="8.8" height="8.8" viewBox="0 0 16 16"><g fill="none" stroke="#cccccc" stroke-width="1.2" stroke-linejoin="round"><path d="M8 2L14.400 13.600H1.600z"/><path d="M8 6.400v3.600M8 11.400v.8"/></g></svg>
<div class="t" style="top:613.00px;line-height:11.68px;font-size:7.3px;color:#cccccc;left:178.60px;">0</div>
<svg class="b" style="left:191.20px;top:614.20px;" width="8.8" height="8.8" viewBox="0 0 16 16"><g fill="none" stroke="#cccccc" stroke-width="1.2"><circle cx="8" cy="6" r="1.4"/><path d="M8 7.400L5.600 14M8 7.400L10.400 14M4.600 9a4.200 4.200 0 0 1 0-6M11.400 9a4.200 4.200 0 0 0 0-6M2.600 10.600a6.800 6.800 0 0 1 0-9.200M13.400 10.600a6.800 6.800 0 0 0 0-9.200"/></g></svg>
<div class="t" style="top:613.00px;line-height:11.68px;font-size:7.3px;color:#cccccc;left:202.40px;">0</div>
<div class="t" style="top:613.00px;line-height:11.68px;font-size:7.3px;color:#cccccc;left:713.50px;">Ln 68, Col 1</div>
<div class="t" style="top:613.00px;line-height:11.68px;font-size:7.3px;color:#cccccc;left:763.00px;">Spaces: 2</div>
<div class="t" style="top:613.00px;line-height:11.68px;font-size:7.3px;color:#cccccc;left:805.00px;">UTF-8</div>
<div class="t" style="top:613.00px;line-height:11.68px;font-size:7.3px;color:#cccccc;left:835.00px;">LF</div>
<div class="t" style="top:614.00px;line-height:10.56px;font-size:6.6px;color:#cccccc;left:852.40px;letter-spacing:0.6px;">{}</div>
<div class="t" style="top:613.00px;line-height:11.68px;font-size:7.3px;color:#cccccc;left:863.50px;">TypeScript JSX</div>
<svg class="b" style="left:921.00px;top:614.10px;" width="9" height="9" viewBox="0 0 16 16"><g fill="none" stroke="#cccccc" stroke-width="1.2"><path d="M3 6.400c0-2.400 1.400-3.600 5-3.600s5 1.200 5 3.600"/><rect x="1.800" y="6.400" width="12.400" height="6.800" rx="2.400"/><path d="M6 9v1.800M10 9v1.800"/></g></svg>
<svg class="b" style="left:938.60px;top:614.40px;" width="8.4" height="8.4" viewBox="0 0 16 16"><path d="M2 8.600l3.800 3.800L14 3.800" stroke="#cccccc" stroke-width="1.4" fill="none"/></svg>
<div class="t" style="top:613.00px;line-height:11.68px;font-size:7.3px;color:#cccccc;left:949.00px;">Prettier</div>
<svg class="b" style="left:982.10px;top:614.20px;" width="8.8" height="8.8" viewBox="0 0 16 16"><g fill="none" stroke="#cccccc" stroke-width="1.2"><path d="M3.400 11.400V7.200a4.600 4.600 0 0 1 9.200 0v4.200l1 1.200H2.400zM6.600 13.600a1.400 1.400 0 0 0 2.800 0"/></g></svg>
</div>
</body></html>
